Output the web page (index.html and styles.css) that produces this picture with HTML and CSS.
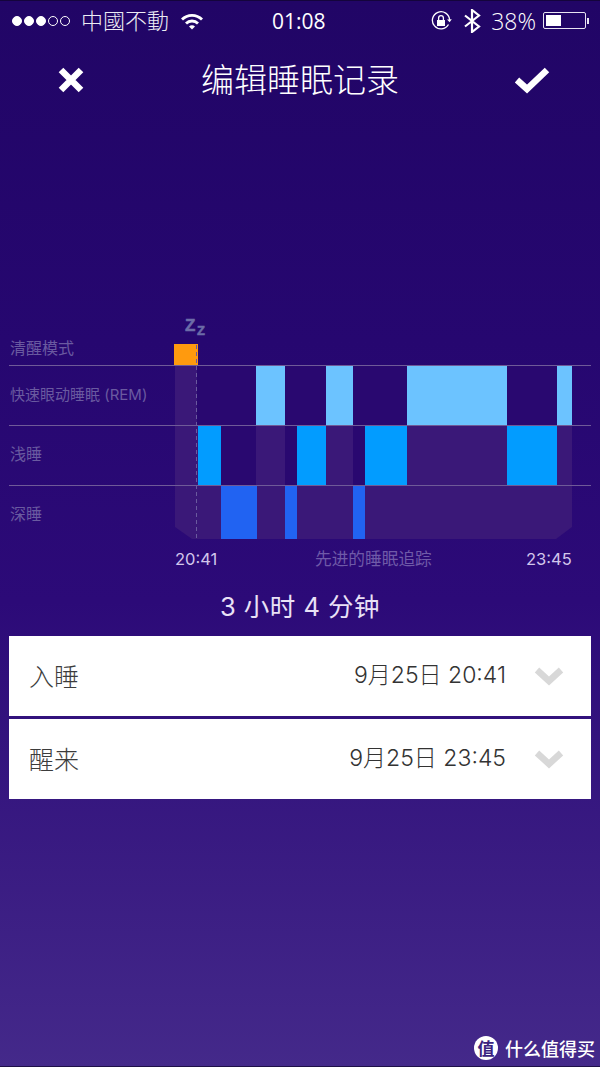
FILE: index.html
```html
<!DOCTYPE html>
<html lang="zh-CN">
<head>
    <meta charset="UTF-8">
    <meta name="viewport" content="width=device-width, initial-scale=1.0">
    <title>编辑睡眠记录</title>
    <link rel="stylesheet" href="styles.css">
</head>
<body>

<div class="screen">
    <div class="status-bar">
        <div class="status-left">
            <span class="dot on"></span><span class="dot on"></span><span class="dot on"></span><span class="dot"></span><span class="dot"></span>
            <span class="carrier">中國不動</span>
            <svg class="wifi" width="24" height="18" viewBox="0 0 24 18">
                <path d="M1 6.500a15.500 15.500 0 0 1 22 0l-2 2a12.600 12.600 0 0 0-18 0z" fill="#fff"/>
                <path d="M5 10.500a9.900 9.900 0 0 1 14 0l-2 2a7 7 0 0 0-10 0z" fill="#fff"/>
                <path d="M9 14.500a4.200 4.200 0 0 1 6 0l-3 3z" fill="#fff"/>
            </svg>
        </div>
        <div class="clock">01:08</div>
        <div class="status-right">
            <svg width="22" height="22" viewBox="0 0 22 22">
                <path d="M18.500 14.500A8.600 8.600 0 1 1 19.600 10" fill="none" stroke="#fff" stroke-width="1.300"/>
                <path d="M17 9.500l2.600 2.800 2.200-3z" fill="#fff"/>
                <rect x="7" y="10" width="8" height="6" fill="#fff"/>
                <path d="M8.600 10V8a2.400 2.400 0 0 1 4.800 0v2" fill="none" stroke="#fff" stroke-width="1.300"/>
            </svg>
            <svg class="bluetooth" width="18" height="24" viewBox="0 0 18 24">
                <path d="M2 6.500l14 11-7 5.500V1l7 5.500-14 11" fill="none" stroke="#fff" stroke-width="2.200"/>
            </svg>
            <span class="battery-text">38%</span>
            <div class="battery"><div class="battery-fill"></div></div>
            <div class="battery-tip"></div>
        </div>
    </div>

    <div class="nav-bar">
        <svg width="30" height="30" viewBox="0 0 30 30">
            <path d="M5 5l20 20M25 5L5 25" stroke="#fff" stroke-width="6.500" fill="none"/>
        </svg>
        <h1 class="title">编辑睡眠记录</h1>
        <svg width="36" height="30" viewBox="0 0 36 30">
            <path d="M3 15l10 9L33 5" stroke="#fff" stroke-width="6.500" fill="none"/>
        </svg>
    </div>

    <svg class="chart" width="600" height="270" viewBox="0 310 600 270">
        <polygon class="track" points="175,365 572,365 572,527 556,539 192,539 175,527"/>

        <!-- 未开始的部分盖回深色 -->
        <rect class="gap" x="197" y="365" width="375" height="60"/>
        <rect class="gap" x="221" y="425" width="35" height="60"/>
        <rect class="gap" x="285" y="425" width="12" height="60"/>
        <rect class="gap" x="353" y="425" width="12" height="60"/>

        <rect class="awake" x="174" y="344" width="24" height="21"/>

        <rect class="rem" x="256" y="365" width="29" height="60"/>
        <rect class="rem" x="326" y="365" width="27" height="60"/>
        <rect class="rem" x="407" y="365" width="100" height="60"/>
        <rect class="rem" x="557" y="365" width="15" height="60"/>

        <rect class="light" x="198" y="425" width="23" height="60"/>
        <rect class="light" x="297" y="425" width="29" height="60"/>
        <rect class="light" x="365" y="425" width="42" height="60"/>
        <rect class="light" x="507" y="425" width="50" height="60"/>

        <rect class="deep" x="221" y="485" width="36" height="54"/>
        <rect class="deep" x="285" y="485" width="12" height="54"/>
        <rect class="deep" x="353" y="485" width="12" height="54"/>

        <line class="rule" x1="9" y1="365.500" x2="591" y2="365.500"/>
        <line class="rule" x1="9" y1="425.500" x2="591" y2="425.500"/>
        <line class="rule" x1="9" y1="485.500" x2="591" y2="485.500"/>
        <line class="start-line" x1="196.500" y1="345" x2="196.500" y2="539"/>

        <text class="zz-big" x="185" y="331">Z</text>
        <text class="zz-small" x="197" y="335">Z</text>

        <text class="row-label" x="10" y="354">清醒模式</text>
        <text class="row-label small" x="10" y="400">快速眼动睡眠 (REM)</text>
        <text class="row-label" x="10" y="460">浅睡</text>
        <text class="row-label" x="10" y="520">深睡</text>

        <text class="time" x="175" y="565">20:41</text>
        <text class="row-label mode" x="315" y="565">先进的睡眠追踪</text>
        <text class="time" x="526" y="565">23:45</text>
    </svg>

    <div class="duration">3 小时 4 分钟</div>

    <div class="card">
        <span class="card-label">入睡</span>
        <span class="card-value">9月25日 20:41</span>
        <svg class="chevron" width="30" height="20" viewBox="0 0 30 20">
            <path d="M3 4l12 11L27 4" stroke="#d8d8d8" stroke-width="6.500" fill="none"/>
        </svg>
    </div>
    <div class="card">
        <span class="card-label">醒来</span>
        <span class="card-value">9月25日 23:45</span>
        <svg class="chevron" width="30" height="20" viewBox="0 0 30 20">
            <path d="M3 4l12 11L27 4" stroke="#d8d8d8" stroke-width="6.500" fill="none"/>
        </svg>
    </div>

    <div class="watermark">
        <span class="watermark-logo">值</span>
        <span>什么值得买</span>
    </div>
</div>

</body>
</html>
```

FILE: styles.css
```css
body {
    margin: 0;
    font-family: "Liberation Sans", "Noto Sans CJK SC", sans-serif;
}
.screen {
    position: relative;
    width: 600px;
    height: 1067px;
    overflow: hidden;
    background: linear-gradient(#210566 0, #260770 340px, #2c0a78 600px, #44298a 1067px);
    border-top: 1px solid #14043c;
    border-bottom: 1px solid #1e1048;
    box-sizing: border-box;
}

/* status bar */
.status-bar {
    display: flex;
    align-items: center;
    justify-content: space-between;
    height: 39px;
    padding: 0 11px 0 12px;
    color: #fff;
    position: relative;
}
.status-left, .status-right {
    display: flex;
    align-items: center;
}
.dot {
    width: 10px;
    height: 10px;
    margin-right: 2px;
    border: 1px solid #fff;
    border-radius: 50%;
    box-sizing: border-box;
}
.dot.on {
    background-color: #fff;
}
.carrier {
    margin-left: 9px;
    margin-bottom: 3px;
    font-family: "Noto Sans CJK TC", sans-serif;
    font-size: 22px;
    font-weight: 300;
    color: #ececf4;
}
.wifi {
    margin-left: 11px;
}
.clock {
    position: absolute;
    left: 272px;
    font-family: "Open Sans", sans-serif;
    font-size: 21px;
    font-weight: 400;
}
.bluetooth {
    margin-left: 11px;
}
.battery-text {
    margin-left: 10px;
    font-family: "Open Sans", sans-serif;
    font-size: 23px;
    font-weight: 300;
}
.battery {
    width: 43px;
    height: 17px;
    margin-left: 7px;
    padding: 2px;
    border: 1px solid #e8e4f2;
    border-radius: 2px;
    box-sizing: border-box;
}
.battery-fill {
    width: 15px;
    height: 100%;
    background-color: #fff;
}
.battery-tip {
    width: 2px;
    height: 6px;
    margin-left: 1px;
    background-color: #e8e4f2;
}

/* nav */
.nav-bar {
    display: flex;
    align-items: center;
    justify-content: space-between;
    height: 80px;
    padding: 0 50px 0 56px;
}
.title {
    margin: 0 0 5px;
    font-family: "Noto Sans CJK SC", sans-serif;
    font-size: 33px;
    font-weight: 300;
    color: #fff;
}

/* chart */
.chart {
    display: block;
    margin-top: 190px;
}
.track { fill: #3a1878; }
.gap { fill: #290870; }
.awake { fill: #ff9a0e; }
.rem { fill: #6cc3ff; }
.light { fill: #029cff; }
.deep { fill: #2163f2; }
.rule {
    stroke: #6f5a98;
    stroke-width: 1;
}
.start-line {
    stroke: #6a5a9e;
    stroke-width: 1;
    stroke-dasharray: 4 3;
}
.zz-big, .zz-small {
    font-family: "Liberation Sans", sans-serif;
    font-weight: 700;
    fill: #6c6ca8;
    stroke: #6c6ca8;
    stroke-width: 0.500;
}
.zz-big { font-size: 17px; }
.zz-small { font-size: 13px; }
.row-label {
    font-family: "Noto Sans CJK SC", sans-serif;
    font-size: 16px;
    fill: #6a5aa0;
}
.row-label.small {
    font-family: "Inter", "Noto Sans CJK SC", sans-serif;
    font-size: 15px;
}
.row-label.mode {
    font-size: 16.700px;
    fill: #6f5aa8;
}
.time {
    font-family: "Inter", sans-serif;
    font-size: 16.500px;
    fill: #d2c6ec;
}

/* duration + cards */
.duration {
    height: 56px;
    line-height: 54px;
    text-align: center;
    font-family: "Inter", "Noto Sans CJK SC", sans-serif;
    font-size: 25.500px;
    font-weight: 400;
    letter-spacing: 0.500px;
    color: #e9e1f6;
}
.card {
    display: flex;
    align-items: center;
    height: 80px;
    margin: 0 9px 3px;
    padding: 0 27px 0 20px;
    background-color: #fff;
}
.card-label {
    margin-bottom: 3px;
    font-family: "Noto Sans CJK SC", sans-serif;
    font-size: 25px;
    font-weight: 300;
    color: #3c3c3c;
}
.card-value {
    margin-left: auto;
    margin-right: 28px;
    margin-bottom: 6px;
    font-family: "Inter", "Noto Sans CJK SC", sans-serif;
    font-size: 23px;
    font-weight: 300;
    color: #333;
}

/* watermark */
.watermark {
    position: absolute;
    right: 5px;
    bottom: 5px;
    display: flex;
    align-items: center;
    gap: 7px;
    font-family: "Noto Sans CJK SC", sans-serif;
    font-size: 18px;
    font-weight: 500;
    color: #fff;
}
.watermark-logo {
    width: 24px;
    height: 24px;
    line-height: 24px;
    border-radius: 50%;
    text-align: center;
    font-size: 17px;
    font-weight: 700;
    background-color: #fff;
    color: #3a2380;
}
```
